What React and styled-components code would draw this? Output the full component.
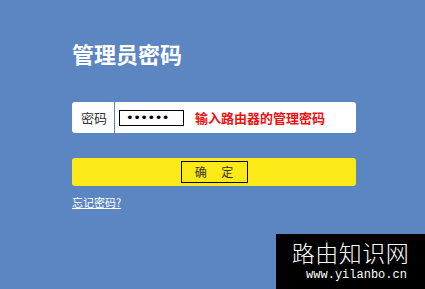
import React from 'react'
import styled, { createGlobalStyle } from 'styled-components'

const GlobalStyle = createGlobalStyle`
  html, body { margin: 0; padding: 0; }
  body {
    background: #5c86c1;
    font-family: "Noto Sans CJK SC", "Liberation Sans", sans-serif;
  }
`

const Page = styled.div`
  position: relative;
  width: 425px;
  height: 289px;
  overflow: hidden;
  background: #5c86c1;
`

const Panel = styled.form`
  display: flex;
  flex-direction: column;
  width: 284px;
  padding: 37px 0 0 72px;
`

const Title = styled.h1`
  margin: 0;
  color: #fff;
  font-size: 22px;
  font-weight: bold;
  line-height: 32px;
`

const Field = styled.div`
  display: flex;
  align-items: center;
  height: 31px;
  margin-top: 33px;
  background: #fff;
  border-radius: 3px;
`

const Label = styled.span`
  width: 43px;
  padding-left: 9px;
  box-sizing: border-box;
  color: #333;
  font-size: 13px;
  line-height: 31px;
  border-right: 1px solid #5c86c1;
`

const Secret = styled.div`
  display: flex;
  align-items: center;
  width: 57px;
  height: 14px;
  margin-left: 4px;
  padding-left: 6px;
  border: 1px solid #000;
  font-family: "DejaVu Sans", sans-serif;
  font-size: 13px;
  letter-spacing: -0.5px;
  color: #000;
`

const Hint = styled.span`
  margin-left: 11px;
  color: #f01010;
  font-size: 13px;
  font-weight: bold;
`

const Submit = styled.button`
  display: flex;
  justify-content: center;
  align-items: center;
  height: 28px;
  margin-top: 25px;
  padding: 0;
  border: 0;
  border-radius: 3px;
  background: #fcea18;
  cursor: pointer;
`

const SubmitText = styled.span`
  width: 65px;
  height: 20px;
  border: 1px solid #000;
  color: #333;
  font-family: "Noto Sans CJK SC", sans-serif;
  font-size: 12px;
  line-height: 20px;
  text-align: center;
  white-space: pre;
`

const Forgot = styled.a`
  margin-top: 10px;
  align-self: flex-start;
  color: #fff;
  font-size: 11px;
  line-height: 13px;
  text-decoration: underline;
`

const Watermark = styled.div`
  position: absolute;
  left: 276px;
  top: 234px;
  width: 149px;
  height: 55px;
  background: #000;
  color: #fff;
  display: flex;
  flex-direction: column;
  align-items: center;
`

const MarkName = styled.div`
  margin-top: 5px;
  font-size: 23px;
  line-height: 27px;
  letter-spacing: 0.5px;
  font-family: "Noto Sans CJK SC", serif;
  font-weight: 300;
`

const MarkUrl = styled.div`
  margin-top: 2px;
  padding-left: 12px;
  font-size: 12px;
  font-family: "Liberation Mono", monospace;
`

export default function App() {
  return (
    <Page>
      <GlobalStyle />
      <Panel onSubmit={e => e.preventDefault()}>
        <Title>管理员密码</Title>
        <Field>
          <Label>密码</Label>
          <Secret>••••••</Secret>
          <Hint>输入路由器的管理密码</Hint>
        </Field>
        <Submit type="submit">
          <SubmitText>{'确　 定'}</SubmitText>
        </Submit>
        <Forgot href="#">忘记密码?</Forgot>
      </Panel>
      <Watermark>
        <MarkName>路由知识网</MarkName>
        <MarkUrl>www.yilanbo.cn</MarkUrl>
      </Watermark>
    </Page>
  )
}
